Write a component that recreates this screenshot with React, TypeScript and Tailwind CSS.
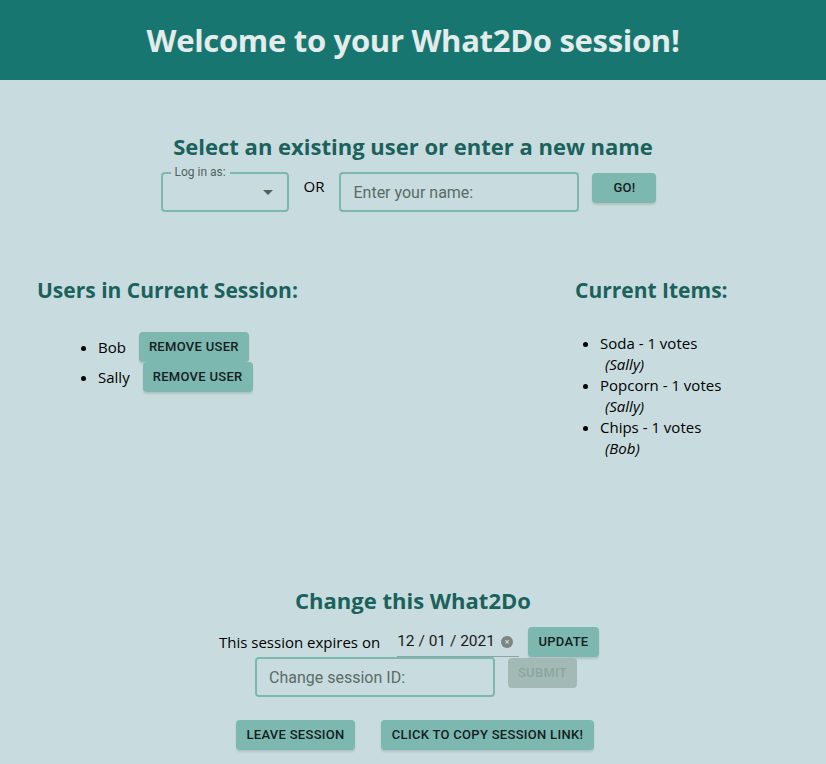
import { useState } from "react";

const users = ["Bob", "Sally"];

const items = [
  { name: "Soda", votes: 1, by: "Sally" },
  { name: "Popcorn", votes: 1, by: "Sally" },
  { name: "Chips", votes: 1, by: "Bob" },
];

const seg = "font-['Open_Sans',sans-serif]";
const rob = "font-['Roboto',sans-serif]";

const btn =
  "inline-flex items-center justify-center h-[30px] rounded-[4px] bg-[#7db8b0] px-[10px] text-[13px] font-medium uppercase tracking-[0.3px] text-[#13201e] shadow-[0_2px_2px_rgba(0,0,0,0.12)] " +
  rob;

export default function App() {
  const [name, setName] = useState("");
  const [sessionId, setSessionId] = useState("");

  return (
    <div className={"min-h-[764px] bg-[#c8dcdf] text-black " + seg}>
      <header className="flex h-[80px] items-center justify-center bg-[#177770]">
        <h1 className="text-[31px] font-bold tracking-[-0.3px] text-[#e3ecea]">
          Welcome to your What2Do session!
        </h1>
      </header>

      <section className="mt-[51px] flex flex-col items-center">
        <h2 className="text-[22px] font-bold leading-[30px] text-[#1b615c]">
          Select an existing user or enter a new name
        </h2>
        <div className="mt-[11px] flex items-start pr-[9px]">
          <div className="relative h-[40px] w-[128px] rounded-[4px] border-2 border-[#7db8b0]">
            <span
              className={
                "absolute -top-[9px] left-[8px] bg-[#c8dcdf] px-[4px] text-[12px] leading-[14px] text-[#4f6460] " + rob
              }
            >
              Log in as:
            </span>
            <span className="absolute right-[14px] top-[16px] h-0 w-0 border-x-[5px] border-t-[5px] border-x-transparent border-t-[#555f5c]" />
          </div>
          <span className="ml-[15px] mt-[4px] text-[15px] leading-[20px]">OR</span>
          <input
            value={name}
            onChange={(e) => setName(e.target.value)}
            placeholder="Enter your name:"
            className={
              "ml-[15px] h-[40px] w-[240px] rounded-[4px] border-2 border-[#7db8b0] bg-transparent px-[12px] text-[16px] text-[#1f2a28] placeholder-[#5b6b66] outline-none " +
              rob
            }
          />
          <button className={btn + " ml-[13px] mt-px w-[64px]"}>GO!</button>
        </div>
      </section>

      <section className="mt-[63px] flex">
        <div className="pl-[37px]">
          <h3 className="text-[21px] font-bold leading-[30px] text-[#1b615c]">
            Users in Current Session:
          </h3>
          <ul className="mt-[27px] list-disc pl-[61px] text-[15px]">
            {users.map((u) => (
              <li key={u} className="leading-[30px]">
                <span className="inline-flex items-center">
                  {u}
                  <button className={btn + " ml-[13px]"}>Remove User</button>
                </span>
              </li>
            ))}
          </ul>
        </div>
        <div className="ml-auto w-[251px]">
          <h3 className="text-[21px] font-bold leading-[30px] text-[#1b615c]">
            Current Items:
          </h3>
          <ul className="mt-[28px] list-disc pl-[25px] text-[15px] leading-[21px]">
            {items.map((it) => (
              <li key={it.name}>
                {it.name} - {it.votes} votes
                <div className="pl-[5px] italic">({it.by})</div>
              </li>
            ))}
          </ul>
        </div>
      </section>

      <section className="mt-[126px] flex flex-col items-center">
        <h2 className="text-[22px] font-bold leading-[30px] text-[#1b615c]">
          Change this What2Do
        </h2>
        <div className="mt-[12px] flex items-center pr-[8px]">
          <span className="text-[15px]">This session expires on</span>
          <div className="ml-[17px] flex h-[30px] items-center border-b border-[#8fa39f]">
            <span className={"text-[15.5px] text-[#1a1a1a] " + rob}>12 / 01 / 2021</span>
            <span className="ml-[6px] mr-[6px] flex h-[12px] w-[12px] items-center justify-center rounded-full bg-[#7d8482] text-[9px] font-bold leading-none text-[#c8dcdf]">
              ×
            </span>
          </div>
          <button className={btn + " ml-[9px] w-[71px]"}>Update</button>
        </div>
        <div className="ml-[6px] flex items-start">
          <input
            value={sessionId}
            onChange={(e) => setSessionId(e.target.value)}
            placeholder="Change session ID:"
            className={
              "h-[40px] w-[240px] rounded-[4px] border-2 border-[#7db8b0] bg-transparent px-[12px] text-[16px] text-[#1f2a28] placeholder-[#5b6b66] outline-none " +
              rob
            }
          />
          <button
            disabled
            className={
              "ml-[13px] mt-px inline-flex h-[30px] w-[69px] items-center justify-center rounded-[4px] bg-[#a3b9b5] text-[13px] font-medium uppercase tracking-[0.3px] text-[#89a7a1] " +
              rob
            }
          >
            Submit
          </button>
        </div>
        <div className="ml-[4px] mt-[23px] flex gap-[26px]">
          <button className={btn + " w-[119px]"}>Leave Session</button>
          <button className={btn + " w-[213px]"}>Click to copy session link!</button>
        </div>
      </section>
    </div>
  );
}
